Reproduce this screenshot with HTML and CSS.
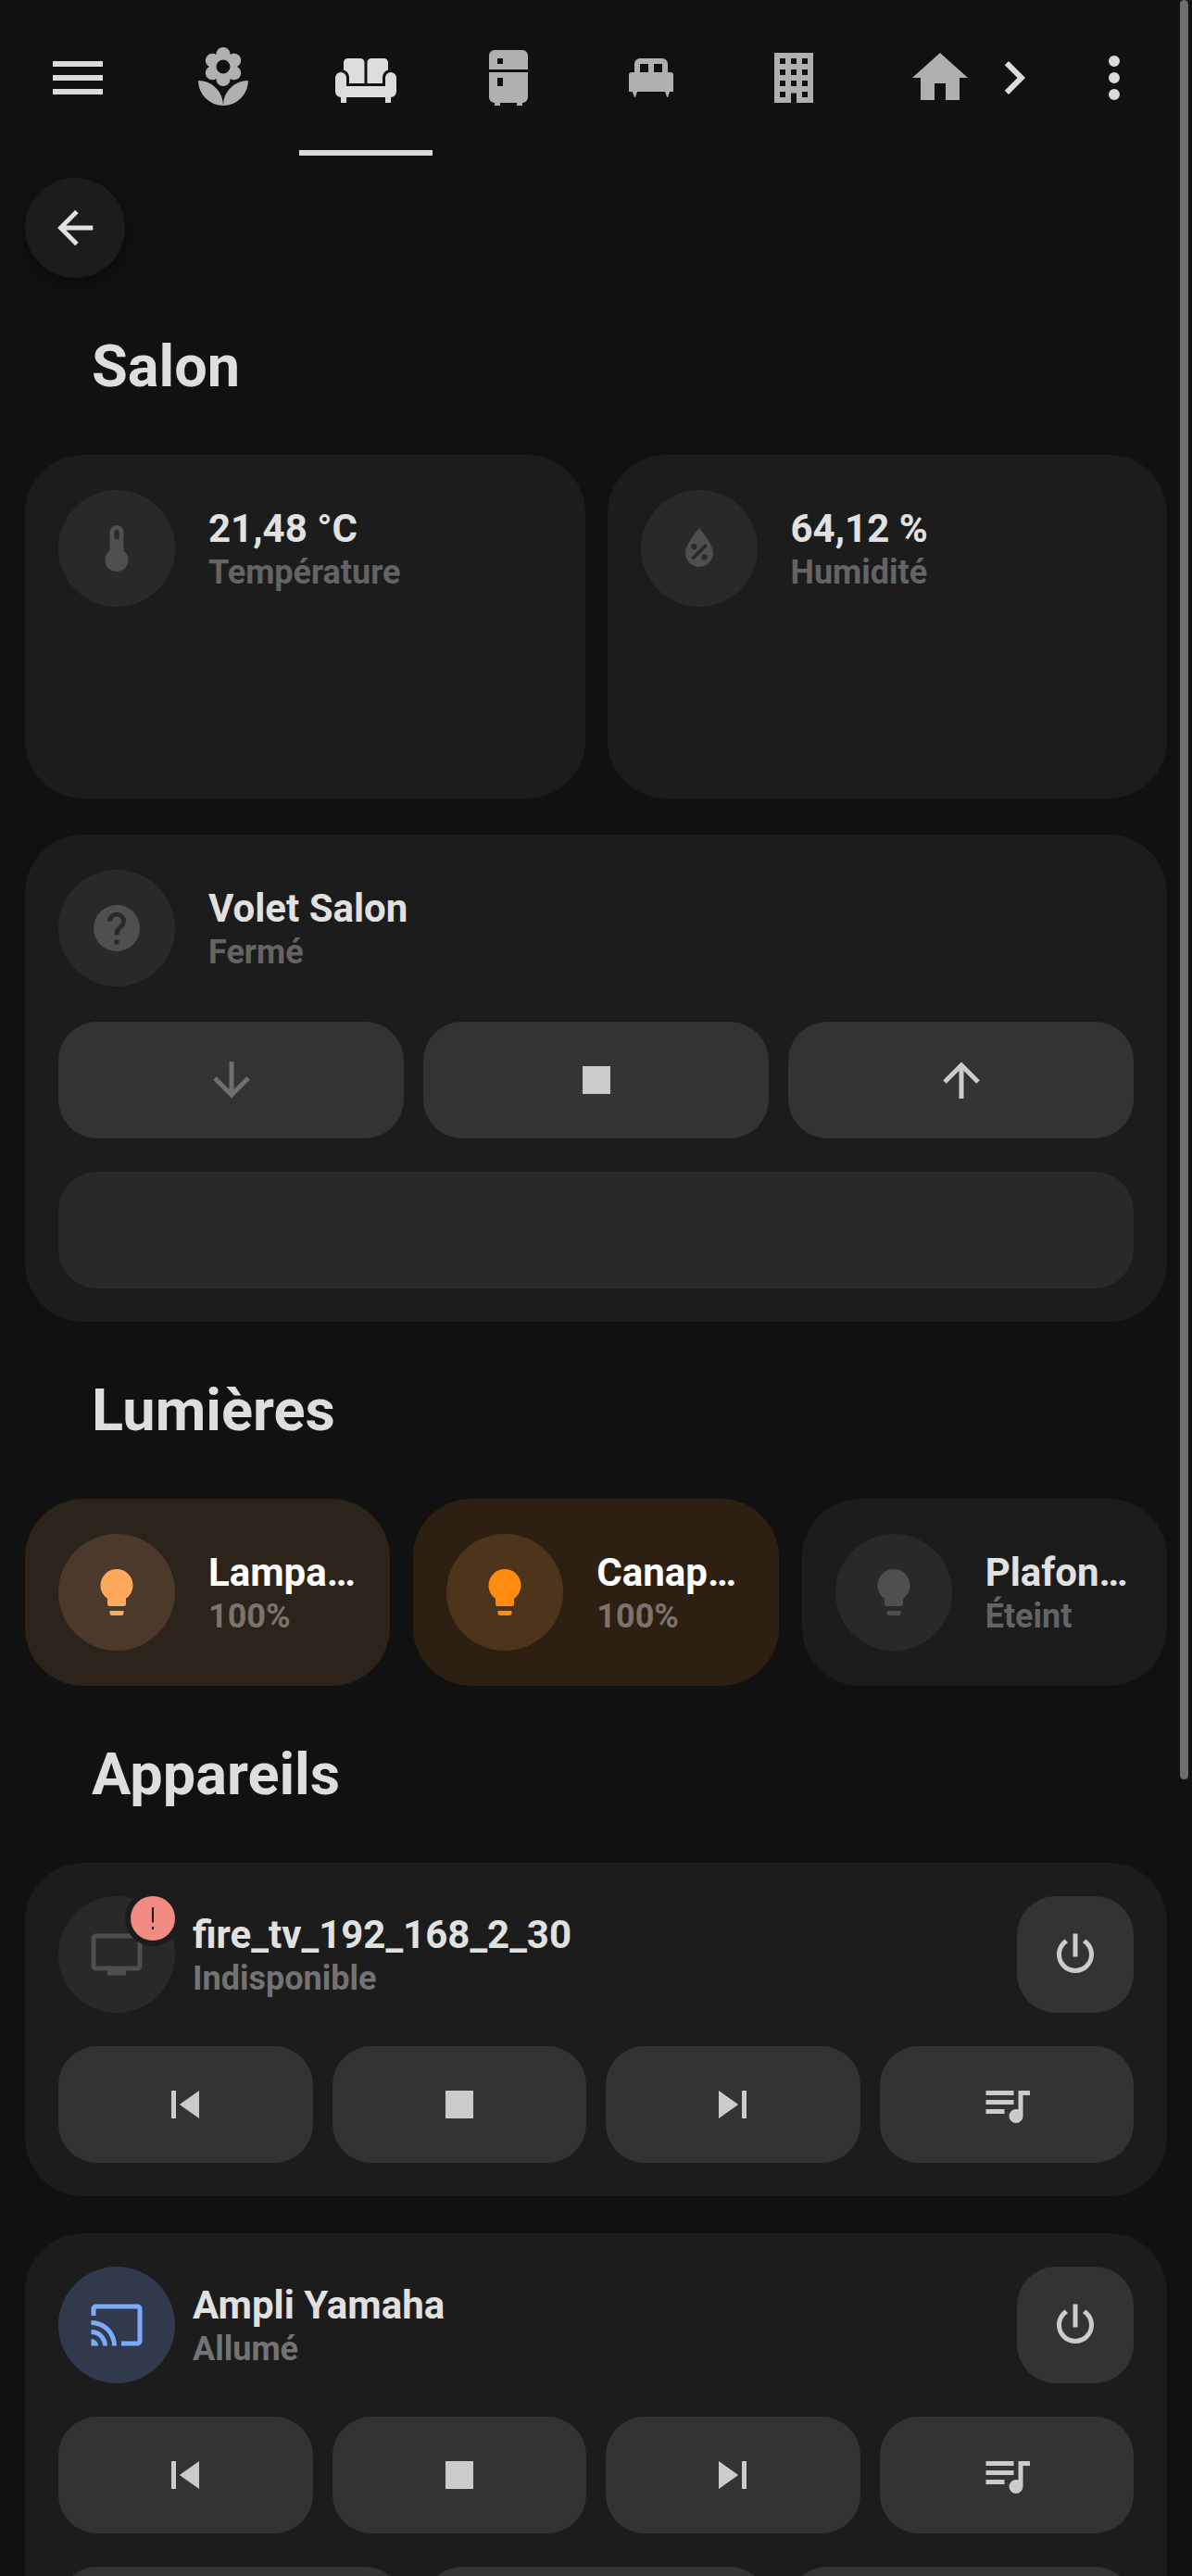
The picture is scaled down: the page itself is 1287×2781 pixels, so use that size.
FILE: index.html
```html
<!DOCTYPE html>
<html lang="fr">
<head>
  <meta charset="UTF-8" />
  <title>Salon</title>
  <link rel="stylesheet" href="styles.css">
</head>
<body>
  <!-- icon set -->
  <svg class="sprite" aria-hidden="true">
    <symbol id="i-menu" viewBox="0 0 24 24"><path d="M3,6H21V8H3V6M3,11H21V13H3V11M3,16H21V18H3V16Z"/></symbol>
    <symbol id="i-flower" viewBox="0 0 24 24"><path d="M3,13A9,9 0 0,0 12,22C12,17 7.97,13 3,13M12,5.5A2.5,2.5 0 0,1 14.5,8A2.5,2.5 0 0,1 12,10.5A2.5,2.5 0 0,1 9.5,8A2.5,2.5 0 0,1 12,5.5M5.6,10.25A2.5,2.5 0 0,0 8.1,12.75C8.63,12.75 9.11,12.59 9.5,12.31V12.5C9.5,13.88 10.62,15 12,15C13.38,15 14.5,13.88 14.5,12.5V12.31C14.89,12.59 15.37,12.75 15.9,12.75C17.28,12.75 18.4,11.63 18.4,10.25C18.4,9.25 17.81,8.4 16.97,8C17.81,7.6 18.4,6.74 18.4,5.75C18.4,4.37 17.28,3.25 15.9,3.25C15.37,3.25 14.89,3.41 14.5,3.69V3.5C14.5,2.12 13.38,1 12,1C10.62,1 9.5,2.12 9.5,3.5V3.69C9.11,3.41 8.63,3.25 8.1,3.25A2.5,2.5 0 0,0 5.6,5.75C5.6,6.74 6.19,7.6 7.03,8C6.19,8.4 5.6,9.25 5.6,10.25M12,22A9,9 0 0,0 21,13C16,13 12,17 12,22Z" fill-rule="evenodd"/></symbol>
    <symbol id="i-sofa" viewBox="0 0 24 24"><path d="M1 12A2 2 0 0 1 5 12V15H19V12A2 2 0 0 1 23 12V17A2 2 0 0 1 21 19H3A2 2 0 0 1 1 17ZM3 19H5V21H3ZM19 19H21V21H19ZM4 6.5A1.5 1.5 0 0 1 5.5 5H10A1.5 1.5 0 0 1 11.5 6.5V14H6V12A3 3 0 0 0 4 9.2ZM12.5 6.5A1.5 1.5 0 0 1 14 5H18.5A1.5 1.5 0 0 1 20 6.5V9.2A3 3 0 0 0 18 12V14H12.5Z"/></symbol>
    <symbol id="i-fridge" viewBox="0 0 24 24"><path d="M7,2H17A2,2 0 0,1 19,4V9H5V4A2,2 0 0,1 7,2M19,19A2,2 0 0,1 17,21V22H15V21H9V22H7V21A2,2 0 0,1 5,19V10H19V19M8,5V7H10V5H8M8,12V15H10V12H8Z" fill-rule="evenodd"/></symbol>
    <symbol id="i-bed" viewBox="0 0 24 24"><path d="M8 5H16A2 2 0 0 1 18 7V10H19A1 1 0 0 1 20 11V17H18.7L18 19H17.7L17 17H7L6.3 19H6L5.3 17H4V11A1 1 0 0 1 5 10H6V7A2 2 0 0 1 8 5M8 7V10H11V7H8M13 7V10H16V7H13Z" fill-rule="evenodd"/></symbol>
    <symbol id="i-building" viewBox="0 0 24 24"><path d="M5,3V21H11V17.5H13V21H19V3H5M7,5H9V7H7V5M11,5H13V7H11V5M15,5H17V7H15V5M7,9H9V11H7V9M11,9H13V11H11V9M15,9H17V11H15V9M7,13H9V15H7V13M11,13H13V15H11V13M15,13H17V15H15V13M7,17H9V19H7V17M15,17H17V19H15V17Z" fill-rule="evenodd"/></symbol>
    <symbol id="i-home" viewBox="0 0 24 24"><path d="M10,20V14H14V20H19V12H22L12,3L2,12H5V20H10Z"/></symbol>
    <symbol id="i-chevron" viewBox="0 0 24 24"><path d="M8.59,16.58L13.17,12L8.59,7.41L10,6L16,12L10,18L8.59,16.58Z"/></symbol>
    <symbol id="i-dots" viewBox="0 0 24 24"><path d="M12,16A2,2 0 0,1 14,18A2,2 0 0,1 12,20A2,2 0 0,1 10,18A2,2 0 0,1 12,16M12,10A2,2 0 0,1 14,12A2,2 0 0,1 12,14A2,2 0 0,1 10,12A2,2 0 0,1 12,10M12,4A2,2 0 0,1 14,6A2,2 0 0,1 12,8A2,2 0 0,1 10,6A2,2 0 0,1 12,4Z"/></symbol>
    <symbol id="i-back" viewBox="0 0 24 24"><path d="M20,11V13H8L13.5,18.5L12.08,19.92L4.16,12L12.08,4.08L13.5,5.5L8,11H20Z"/></symbol>
    <symbol id="i-thermo" viewBox="0 0 24 24"><path d="M15 13V5A3 3 0 0 0 9 5V13A5 5 0 1 0 15 13M12 4A1 1 0 0 1 13 5V8H11V5A1 1 0 0 1 12 4Z" fill-rule="evenodd"/></symbol>
    <symbol id="i-water" viewBox="0 0 24 24"><path d="M12,3.25C12,3.25 6,10 6,14C6,17.32 8.69,20 12,20A6,6 0 0,0 18,14C18,10 12,3.25 12,3.25M14.47,9.97L15.53,11.03L9.53,17.03L8.47,15.97M9.75,10A1.25,1.25 0 0,1 11,11.25A1.25,1.25 0 0,1 9.75,12.5A1.25,1.25 0 0,1 8.5,11.25A1.25,1.25 0 0,1 9.75,10M14.25,14.5A1.25,1.25 0 0,1 15.5,15.75A1.25,1.25 0 0,1 14.25,17A1.25,1.25 0 0,1 13,15.75A1.25,1.25 0 0,1 14.25,14.5Z" fill-rule="evenodd"/></symbol>
    <symbol id="i-help" viewBox="0 0 24 24"><path d="M15.07,11.25L14.17,12.17C13.45,12.89 13,13.5 13,15H11V14.5C11,13.39 11.45,12.39 12.17,11.67L13.41,10.41C13.78,10.05 14,9.55 14,9C14,7.89 13.1,7 12,7A2,2 0 0,0 10,9H8A4,4 0 0,1 12,5A4,4 0 0,1 16,9C16,9.88 15.64,10.67 15.07,11.25M13,19H11V17H13M12,2A10,10 0 0,0 2,12A10,10 0 0,0 12,22A10,10 0 0,0 22,12C22,6.47 17.5,2 12,2Z" fill-rule="evenodd"/></symbol>
    <symbol id="i-bulb" viewBox="0 0 24 24"><path d="M12,2A7,7 0 0,0 5,9C5,11.38 6.19,13.47 8,14.74V17A1,1 0 0,0 9,18H15A1,1 0 0,0 16,17V14.74C17.81,13.47 19,11.38 19,9A7,7 0 0,0 12,2M9,21A1,1 0 0,0 10,22H14A1,1 0 0,0 15,21V20H9V21Z"/></symbol>
    <symbol id="i-tv" viewBox="0 0 24 24"><path d="M21,17H3V5H21M21,3H3A2,2 0 0,0 1,5V17A2,2 0 0,0 3,19H8V21H16V19H21A2,2 0 0,0 23,17V5A2,2 0 0,0 21,3Z"/></symbol>
    <symbol id="i-cast" viewBox="0 0 24 24"><path d="M1,10V12A9,9 0 0,1 10,21H12C12,14.92 7.07,10 1,10M1,14V16A5,5 0 0,1 6,21H8A7,7 0 0,0 1,14M1,18V21H4A3,3 0 0,0 1,18M21,3H3C1.89,3 1,3.89 1,5V8H3V5H21V19H14V21H21A2,2 0 0,0 23,19V5C23,3.89 22.1,3 21,3Z"/></symbol>
    <symbol id="i-down" viewBox="0 0 24 24"><path d="M11,4H13V16L18.5,10.5L19.92,11.92L12,19.84L4.08,11.92L5.5,10.5L11,16V4Z"/></symbol>
    <symbol id="i-up" viewBox="0 0 24 24"><path d="M13,20H11V8L5.5,13.5L4.08,12.08L12,4.16L19.92,12.08L18.5,13.5L13,8V20Z"/></symbol>
    <symbol id="i-stop" viewBox="0 0 24 24"><path d="M18,18H6V6H18V18Z"/></symbol>
    <symbol id="i-prev" viewBox="0 0 24 24"><path d="M6,18V6H8V18H6M9.5,12L18,6V18L9.5,12Z"/></symbol>
    <symbol id="i-next" viewBox="0 0 24 24"><path d="M16,18H18V6H16M6,18L14.5,12L6,6V18Z"/></symbol>
    <symbol id="i-playlist" viewBox="0 0 24 24"><path d="M15,6H3V8H15V6M15,10H3V12H15V10M3,16H11V14H3V16M17,6V14.18C16.69,14.07 16.35,14 16,14A3,3 0 0,0 13,17A3,3 0 0,0 16,20A3,3 0 0,0 19,17V8H22V6H17Z"/></symbol>
    <symbol id="i-power" viewBox="0 0 24 24"><path d="M16.56,5.44L15.11,6.89C16.84,7.94 18,9.83 18,12A6,6 0 0,1 12,18A6,6 0 0,1 6,12C6,9.83 7.16,7.94 8.88,6.88L7.44,5.44C5.36,6.88 4,9.28 4,12A8,8 0 0,0 12,20A8,8 0 0,0 20,12C20,9.28 18.64,6.88 16.56,5.44M13,3H11V13H13"/></symbol>
    <symbol id="i-alert" viewBox="0 0 24 24"><path d="M11.3,4H12.7V15H11.3ZM11.3,18H12.7V20H11.3Z"/></symbol>
  </svg>

  <nav class="topbar">
    <svg class="nav-icon menu-icon"><use href="#i-menu"/></svg>
    <div class="tabs">
      <div class="tab"><svg class="nav-icon"><use href="#i-flower"/></svg></div>
      <div class="tab active"><svg class="nav-icon"><use href="#i-sofa"/></svg></div>
      <div class="tab"><svg class="nav-icon"><use href="#i-fridge"/></svg></div>
      <div class="tab"><svg class="nav-icon"><use href="#i-bed"/></svg></div>
      <div class="tab"><svg class="nav-icon"><use href="#i-building"/></svg></div>
      <div class="tab tab-home"><svg class="nav-icon"><use href="#i-home"/></svg></div>
    </div>
    <svg class="nav-icon chevron-icon"><use href="#i-chevron"/></svg>
    <svg class="nav-icon dots-icon"><use href="#i-dots"/></svg>
  </nav>

  <main class="page">
    <button class="back-btn"><svg class="back-icon"><use href="#i-back"/></svg></button>

    <h2 class="section-title">Salon</h2>

    <section class="grid-2">
      <div class="card sensor">
        <div class="row">
          <div class="shape"><svg class="icon"><use href="#i-thermo"/></svg></div>
          <div class="info">
            <div class="primary">21,48 °C</div>
            <div class="secondary">Température</div>
          </div>
        </div>
      </div>
      <div class="card sensor">
        <div class="row">
          <div class="shape"><svg class="icon"><use href="#i-water"/></svg></div>
          <div class="info">
            <div class="primary">64,12 %</div>
            <div class="secondary">Humidité</div>
          </div>
        </div>
      </div>
    </section>

    <section class="card cover">
      <div class="row">
        <div class="shape"><svg class="icon"><use href="#i-help"/></svg></div>
        <div class="info">
          <div class="primary">Volet Salon</div>
          <div class="secondary">Fermé</div>
        </div>
      </div>
      <div class="controls three">
        <div class="ctrl off"><svg class="icon"><use href="#i-down"/></svg></div>
        <div class="ctrl"><svg class="icon"><use href="#i-stop"/></svg></div>
        <div class="ctrl"><svg class="icon"><use href="#i-up"/></svg></div>
      </div>
      <div class="slider"></div>
    </section>

    <h2 class="section-title">Lumières</h2>

    <section class="grid-3">
      <div class="card light warm">
        <div class="row">
          <div class="shape"><svg class="icon"><use href="#i-bulb"/></svg></div>
          <div class="info">
            <div class="primary">Lampa…</div>
            <div class="secondary">100%</div>
          </div>
        </div>
      </div>
      <div class="card light orange">
        <div class="row">
          <div class="shape"><svg class="icon"><use href="#i-bulb"/></svg></div>
          <div class="info">
            <div class="primary">Canap…</div>
            <div class="secondary">100%</div>
          </div>
        </div>
      </div>
      <div class="card light">
        <div class="row">
          <div class="shape"><svg class="icon"><use href="#i-bulb"/></svg></div>
          <div class="info">
            <div class="primary">Plafon…</div>
            <div class="secondary">Éteint</div>
          </div>
        </div>
      </div>
    </section>

    <h2 class="section-title">Appareils</h2>

    <section class="card media">
      <div class="row">
        <div class="shape">
          <svg class="icon"><use href="#i-tv"/></svg>
          <span class="badge"><svg class="badge-icon"><use href="#i-alert"/></svg></span>
        </div>
        <div class="info">
          <div class="primary">fire_tv_192_168_2_30</div>
          <div class="secondary">Indisponible</div>
        </div>
        <div class="ctrl power"><svg class="icon"><use href="#i-power"/></svg></div>
      </div>
      <div class="controls four">
        <div class="ctrl"><svg class="icon"><use href="#i-prev"/></svg></div>
        <div class="ctrl"><svg class="icon"><use href="#i-stop"/></svg></div>
        <div class="ctrl"><svg class="icon"><use href="#i-next"/></svg></div>
        <div class="ctrl"><svg class="icon"><use href="#i-playlist"/></svg></div>
      </div>
    </section>

    <section class="card media">
      <div class="row">
        <div class="shape cast"><svg class="icon"><use href="#i-cast"/></svg></div>
        <div class="info">
          <div class="primary">Ampli Yamaha</div>
          <div class="secondary">Allumé</div>
        </div>
        <div class="ctrl power"><svg class="icon"><use href="#i-power"/></svg></div>
      </div>
      <div class="controls four">
        <div class="ctrl"><svg class="icon"><use href="#i-prev"/></svg></div>
        <div class="ctrl"><svg class="icon"><use href="#i-stop"/></svg></div>
        <div class="ctrl"><svg class="icon"><use href="#i-next"/></svg></div>
        <div class="ctrl"><svg class="icon"><use href="#i-playlist"/></svg></div>
      </div>
      <div class="controls three">
        <div class="ctrl"></div>
        <div class="ctrl"></div>
        <div class="ctrl"></div>
      </div>
    </section>
  </main>

  <div class="scroll-thumb"></div>
</body>
</html>
```

FILE: styles.css
```css
html, body {
  margin: 0;
  padding: 0;
  height: 2781px;
  overflow: hidden;
  background: #111111;
  font-family: Roboto, "Liberation Sans", sans-serif;
  color: #e1e1e1;
}

.sprite {
  display: none;
}

/* Top bar */
.topbar {
  display: flex;
  align-items: center;
  height: 168px;
  padding-left: 48px;
}
.nav-icon {
  width: 72px;
  height: 72px;
  flex: none;
  fill: #b0b0b0;
}
.menu-icon {
  fill: #dcdcdc;
}
.tabs {
  display: flex;
  margin-left: 44px;
}
.tab {
  position: relative;
  width: 154px;
  height: 168px;
  display: flex;
  align-items: center;
  justify-content: center;
}
.tab.active .nav-icon {
  fill: #dcdcdc;
}
.tab.active::after {
  content: "";
  position: absolute;
  bottom: 0;
  left: 5px;
  width: 144px;
  height: 6px;
  background: #dcdcdc;
}
.tab-home {
  margin-left: 4px;
}
.chevron-icon {
  fill: #dcdcdc;
  margin-left: -33px;
}
.dots-icon {
  fill: #dcdcdc;
  margin-left: 36px;
}

/* Page content */
.page {
  padding: 0 27px;
}
.back-btn {
  display: flex;
  align-items: center;
  justify-content: center;
  width: 108px;
  height: 108px;
  margin-top: 24px;
  padding: 0;
  border: none;
  border-radius: 50%;
  background: #1c1c1c;
  box-shadow: 0 6px 15px rgba(0, 0, 0, 0.4);
}
.back-icon {
  width: 58px;
  height: 58px;
  fill: #e1e1e1;
}
.section-title {
  display: flex;
  align-items: center;
  height: 191px;
  margin: 0;
  padding-left: 72px;
  font-size: 63px;
  font-weight: 700;
  color: #dedede;
}

.grid-2 {
  display: grid;
  grid-template-columns: 1fr 1fr;
  gap: 24px;
  margin-bottom: 39px;
}
.grid-3 {
  display: grid;
  grid-template-columns: repeat(3, 1fr);
  gap: 25px;
}

/* Cards */
.card {
  box-sizing: border-box;
  padding: 36px;
  background: #1c1c1c;
  border-radius: 63px;
}
.sensor {
  height: 371px;
  padding-top: 38px;
}
.cover {
  padding-top: 38px;
}
.cover > .row {
  margin-bottom: 38px;
}
.light {
  height: 202px;
  padding-top: 38px;
}
.media {
  margin-bottom: 40px;
}
.media > .row {
  margin-bottom: 36px;
}

.row {
  display: flex;
  align-items: center;
}
.shape {
  position: relative;
  flex: none;
  width: 126px;
  height: 126px;
  border-radius: 50%;
  background: #292929;
  color: #4f4f4f;
  display: flex;
  align-items: center;
  justify-content: center;
}
.icon {
  width: 60px;
  height: 60px;
  fill: currentColor;
}
.info {
  flex: 1;
  min-width: 0;
  margin-left: 36px;
}
.media .info {
  margin-left: 19px;
}
.primary {
  font-size: 42px;
  line-height: 51px;
  font-weight: 700;
  color: #e1e1e1;
  white-space: nowrap;
}
.secondary {
  font-size: 36px;
  line-height: 44px;
  font-weight: 700;
  color: #646464;
  white-space: nowrap;
}
.media .secondary {
  color: #737373;
}

/* Controls */
.controls {
  display: grid;
  gap: 21px;
}
.controls.three {
  grid-template-columns: repeat(3, 1fr);
}
.controls.four {
  grid-template-columns: repeat(4, 1fr);
}
.controls + .controls,
.controls + .slider {
  margin-top: 36px;
}
.ctrl {
  height: 126px;
  border-radius: 42px;
  background: #333333;
  color: #cbcbcb;
  display: flex;
  align-items: center;
  justify-content: center;
}
.ctrl.off {
  color: #6f6f6f;
}
.power {
  flex: none;
  width: 126px;
}
.slider {
  height: 126px;
  border-radius: 42px;
  background: #292929;
}

/* Light colours */
.warm {
  background: #2c231b;
}
.warm .shape {
  background: #4b3a2b;
  color: #ffa95d;
}
.orange {
  background: #2d2012;
}
.orange .shape {
  background: #4d351c;
  color: #ff8c10;
}
.warm .primary,
.orange .primary {
  color: #ffffff;
}
.warm .secondary,
.orange .secondary {
  color: #7b736c;
}

.shape.cast {
  background: #303a4c;
  color: #7cabf7;
}

/* Unavailable badge */
.badge {
  position: absolute;
  top: 0;
  right: 0;
  width: 48px;
  height: 48px;
  border-radius: 50%;
  background: #f28b82;
  box-shadow: 0 0 0 6px #1c1c1c;
  display: flex;
  align-items: center;
  justify-content: center;
}
.badge-icon {
  width: 36px;
  height: 36px;
  fill: #1c1c1c;
}

.scroll-thumb {
  position: absolute;
  top: 0;
  right: 4px;
  width: 9px;
  height: 1921px;
  border-radius: 5px;
  background: #6e6e6e;
}
```
